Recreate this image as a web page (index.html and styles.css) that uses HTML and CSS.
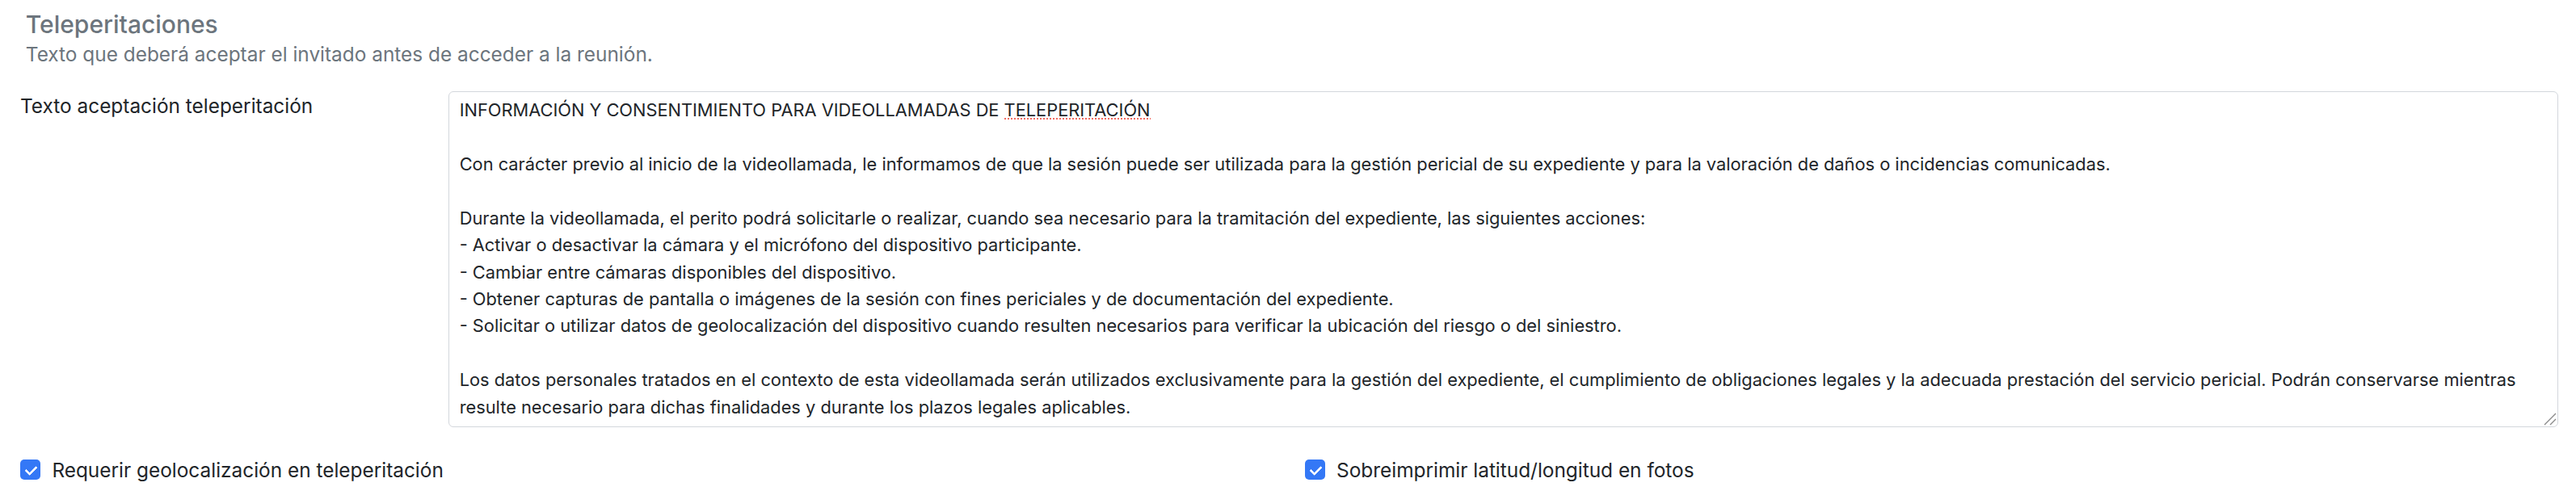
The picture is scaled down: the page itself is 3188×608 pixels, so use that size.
FILE: index.html
```html
<!DOCTYPE html>
<html lang="es">
<head>
<meta charset="utf-8">
<title>Teleperitaciones</title>
<link rel="stylesheet" href="styles.css">
</head>
<body>
<div class="page">
  <header class="section-head">
    <h5 class="section-title">Teleperitaciones</h5>
    <p class="section-desc">Texto que deberá aceptar el invitado antes de acceder a la reunión.</p>
  </header>

  <div class="field-row">
    <label class="col-label" for="texto-acept">Texto aceptación teleperitación</label>
    <div class="col-input">
      <div class="textbox" id="texto-acept" role="textbox" aria-multiline="true" contenteditable="true"><div class="tb-line">INFORMACIÓN Y CONSENTIMIENTO PARA VIDEOLLAMADAS DE <span class="spell">TELEPERITACIÓN</span></div><div class="tb-line"> </div><div class="tb-line">Con carácter previo al inicio de la videollamada, le informamos de que la sesión puede ser utilizada para la gestión pericial de su expediente y para la valoración de daños o incidencias comunicadas.</div><div class="tb-line"> </div><div class="tb-line">Durante la videollamada, el perito podrá solicitarle o realizar, cuando sea necesario para la tramitación del expediente, las siguientes acciones:</div><div class="tb-line">- Activar o desactivar la cámara y el micrófono del dispositivo participante.</div><div class="tb-line">- Cambiar entre cámaras disponibles del dispositivo.</div><div class="tb-line">- Obtener capturas de pantalla o imágenes de la sesión con fines periciales y de documentación del expediente.</div><div class="tb-line">- Solicitar o utilizar datos de geolocalización del dispositivo cuando resulten necesarios para verificar la ubicación del riesgo o del siniestro.</div><div class="tb-line"> </div><div class="tb-line">Los datos personales tratados en el contexto de esta videollamada serán utilizados exclusivamente para la gestión del expediente, el cumplimiento de obligaciones legales y la adecuada prestación del servicio pericial. Podrán conservarse mientras</div><div class="tb-line">resulte necesario para dichas finalidades y durante los plazos legales aplicables.</div></div>
      <svg class="grip" width="16" height="16" viewBox="0 0 16 16" aria-hidden="true"><path d="M1 15 L15 1 M8 15 L15 8" stroke="#8a8a8a" stroke-width="1.4" fill="none"/></svg>
    </div>
  </div>

  <div class="check-row">
    <div class="col-half">
      <label class="check"><input type="checkbox" class="check-input" checked><span class="check-label">Requerir geolocalización en teleperitación</span></label>
    </div>
    <div class="col-half">
      <label class="check"><input type="checkbox" class="check-input" checked><span class="check-label">Sobreimprimir latitud/longitud en fotos</span></label>
    </div>
  </div>
</div>
</body>
</html>
```

FILE: styles.css
```css
* { box-sizing: border-box; }

html, body {
  margin: 0;
  padding: 0;
  background: #ffffff;
}

body {
  font-family: "Inter", "Liberation Sans", Arial, sans-serif;
  color: #212529;
  font-size: 24.4px;
  line-height: 36px;
}

.page {
  padding: 12px 2.8px 0 5.8px;
}

.section-head {
  padding-left: 26px;
}

.section-title {
  margin: 0;
  font-size: 30px;
  line-height: 36px;
  font-weight: 500;
  color: #6c757d;
}

.section-desc {
  margin: 1px 0 0;
  font-size: 24.4px;
  line-height: 36px;
  color: #6c757d;
}

.field-row {
  display: grid;
  grid-template-columns: minmax(0, 1fr) minmax(0, 5fr);
  margin-top: 27.7px;
}

.col-label {
  padding: 0 19.2px;
  font-size: 24.4px;
  line-height: 36.6px;
  color: #212529;
}

.col-input {
  position: relative;
  padding: 0 19.2px;
  min-width: 0;
}

.textbox {
  height: 416px;
  border: 1px solid #d3d7dc;
  border-radius: 6px;
  padding: 6.4px 12.8px;
  font-size: 21.8px;
  line-height: 33.4px;
  color: #212529;
  white-space: pre;
  overflow: hidden;
  outline: none;
}

.tb-line {
  min-height: 33.4px;
}

.spell {
  background-image: linear-gradient(90deg, #f26b61 50%, transparent 50%);
  background-repeat: repeat-x;
  background-size: 4px 2px;
  background-position: 0 calc(100% - 1px);
}

.grip {
  position: absolute;
  right: 21px;
  bottom: 2px;
}

.check-row {
  display: grid;
  grid-template-columns: minmax(0, 1fr) minmax(0, 1fr);
  margin-top: 35px;
}

.col-half {
  padding: 0 19.2px;
}

.check {
  display: flex;
  align-items: center;
  gap: 14px;
  font-size: 24.4px;
  line-height: 36px;
  color: #212529;
}

.check-input {
  appearance: none;
  -webkit-appearance: none;
  position: relative;
  margin: 0;
  width: 25.4px;
  height: 25px;
  border-radius: 5px;
  background: #3478f6;
  border: none;
  flex: none;
}

.check-input::after {
  content: "";
  position: absolute;
  left: 9px;
  top: 5px;
  width: 6px;
  height: 11px;
  border-right: 3px solid #ffffff;
  border-bottom: 3px solid #ffffff;
  transform: rotate(45deg);
  border-radius: 1px;
}
```
